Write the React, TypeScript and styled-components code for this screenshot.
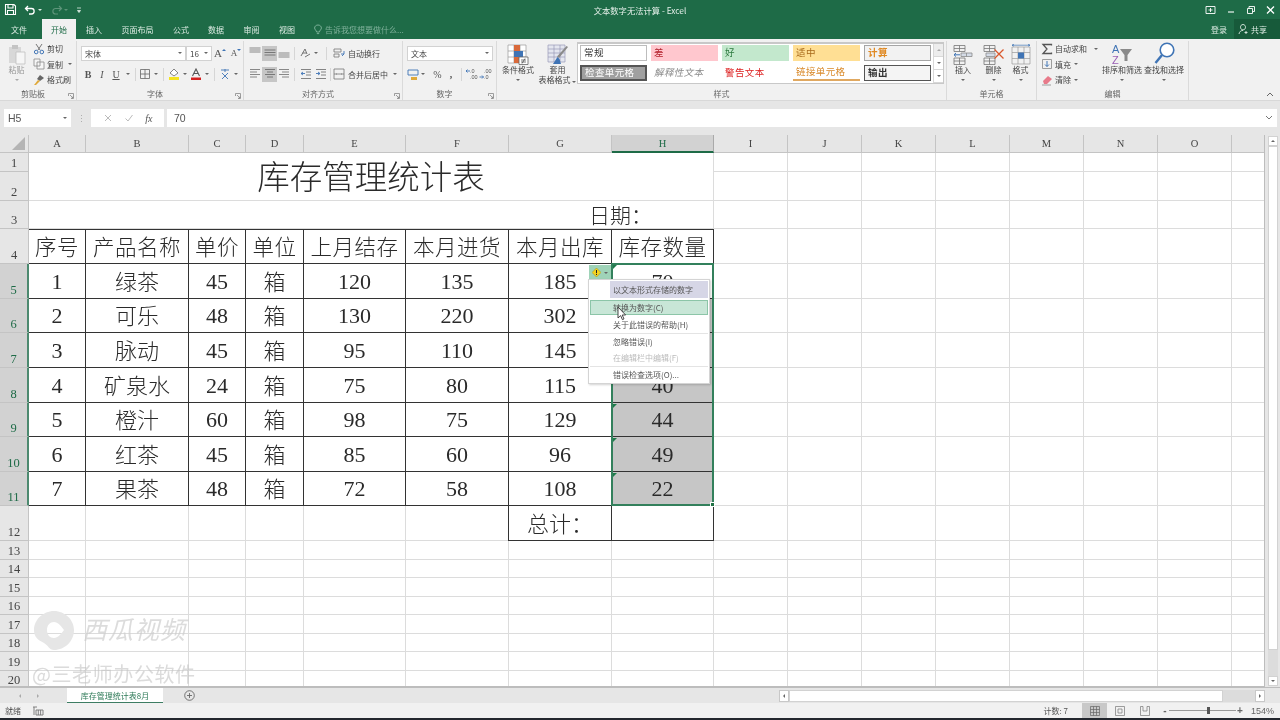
import React from 'react';
import styled, { createGlobalStyle, css } from 'styled-components';

const UI_FONT = '"Noto Sans CJK SC", "Liberation Sans", sans-serif';
const SHEET_FONT = '"Liberation Serif", "Noto Sans CJK SC", serif';
const GREEN = '#1e6b47';

const GlobalStyle = createGlobalStyle`
  html, body { margin: 0; padding: 0; background: #fff; }
  * { box-sizing: border-box; }
`;

const Window = styled.div`
  width: 1280px;
  height: 720px;
  overflow: hidden;
  position: relative;
  display: flex;
  flex-direction: column;
  font-family: ${UI_FONT};
  font-size: 8px;
  color: #444;
  background: #e6e6e6;
  filter: blur(0.35px);
`;

/* ---------- title bar ---------- */

const TitleBar = styled.div`
  height: 39px;
  flex: none;
  background: ${GREEN};
  color: #fff;
`;

const TopStrip = styled.div`
  height: 19px;
  display: grid;
  grid-template-columns: 1fr auto 1fr;
  align-items: center;
`;

const QuickAccess = styled.div`
  display: flex;
  align-items: center;
`;

const QatSlot = styled.div<{ $w: number; $ml: number }>`
  width: ${(p) => p.$w}px;
  margin-left: ${(p) => p.$ml}px;
  display: flex;
  align-items: center;
  justify-content: center;
`;

const DocTitle = styled.div`
  font-size: 8.3px;
  color: #e4efe9;
`;

const WindowButtons = styled.div`
  display: flex;
  justify-content: flex-end;
  gap: 9px;
  padding-right: 4px;
`;

const TabRow = styled.div`
  height: 20px;
  display: flex;
  align-items: stretch;
`;

const RibbonTab = styled.div<{ $w: number; $ml?: number; $active?: boolean }>`
  width: ${(p) => p.$w}px;
  margin-left: ${(p) => p.$ml || 0}px;
  display: flex;
  align-items: center;
  justify-content: center;
  font-size: 8px;
  color: #dcebe3;
  ${(p) =>
    p.$active &&
    css`
      background: #f1f1f1;
      color: ${GREEN};
    `}
`;

const TellMe = styled.div`
  display: flex;
  align-items: center;
  gap: 3px;
  margin-left: 10px;
  color: #7fb09a;
  font-size: 8px;
  flex: 1;
`;

const LoginLink = styled.div`
  display: flex;
  align-items: center;
  margin-right: 7px;
  color: #dcebe3;
`;

const ShareButton = styled.div`
  width: 46px;
  display: flex;
  align-items: center;
  gap: 3px;
  padding-left: 4px;
  background: #175a3a;
  color: #dcebe3;
`;

/* ---------- ribbon ---------- */

const Ribbon = styled.div`
  height: 62px;
  flex: none;
  display: flex;
  background: #f1f1f1;
  padding-top: 2px;
  position: relative;
  border-bottom: 1px solid #d8d8d8;
`;

const GroupBox = styled.div<{ $w: number }>`
  width: ${(p) => p.$w}px;
  flex: none;
  height: 59px;
  display: flex;
  flex-direction: column;
  border-right: 1px solid #dadada;
  position: relative;
`;

const GroupBody = styled.div`
  flex: 1;
  display: flex;
  min-height: 0;
`;

const GroupLabel = styled.div<{ $launcher?: boolean }>`
  height: 13px;
  line-height: 13px;
  text-align: center;
  color: #666;
  font-size: 8px;
  padding-right: ${(p) => (p.$launcher ? 10 : 0)}px;
`;

const Launcher = styled.svg`
  position: absolute;
  right: 2px;
  bottom: 1px;
`;

const caretTurn = { down: 0, up: 180, left: 90, right: -90 };

const Caret = styled.i<{ $dim?: boolean; $dir?: keyof typeof caretTurn; $color?: string; $ml?: number }>`
  display: inline-block;
  flex: none;
  width: 0;
  height: 0;
  border-left: 2px solid transparent;
  border-right: 2px solid transparent;
  border-top: 2px solid ${(p) => p.$color || (p.$dim ? '#aaa' : '#666')};
  transform: rotate(${(p) => caretTurn[p.$dir || 'down']}deg);
  margin-left: ${(p) => p.$ml || 0}px;
`;

const BigButton = styled.div<{ $w: number; $dim?: boolean }>`
  width: ${(p) => p.$w}px;
  flex: none;
  display: flex;
  flex-direction: column;
  align-items: center;
  padding-top: 1px;
  line-height: 10px;
  font-size: 8px;
  white-space: nowrap;
  color: ${(p) => (p.$dim ? '#999' : '#444')};
`;

const BigIconSlot = styled.div`
  height: 23px;
  display: flex;
  align-items: flex-end;
  justify-content: center;
`;

const BigCaretSlot = styled.div`
  height: 9px;
  display: flex;
  align-items: center;
`;

const Stack = styled.div<{ $w?: number; $pl?: number; $two?: boolean }>`
  display: flex;
  flex-direction: column;
  flex: none;
  height: 46px;
  ${(p) => (p.$w ? `width: ${p.$w}px;` : '')}
  padding-left: ${(p) => p.$pl || 0}px;
  ${(p) =>
    p.$two
      ? css`
          padding-top: 4.5px;
          gap: 6px;
        `
      : css`
          justify-content: space-between;
        `}
`;

const ToolRow = styled.div`
  display: flex;
  align-items: center;
  height: 15px;
  white-space: nowrap;
  font-size: 8px;
`;

const ToolBtn = styled.div<{ $w: number; $on?: boolean; $ml?: number }>`
  width: ${(p) => p.$w}px;
  height: 15px;
  flex: none;
  display: flex;
  align-items: center;
  justify-content: center;
  color: #444;
  margin-left: ${(p) => p.$ml || 0}px;
  ${(p) => p.$on && 'background: #c6c6c6;'}
`;

const Glyph = styled.span<{ $size: number; $bold?: boolean; $italic?: boolean; $under?: boolean }>`
  font-family: 'Liberation Serif', serif;
  font-size: ${(p) => p.$size}px;
  font-weight: ${(p) => (p.$bold ? 700 : 400)};
  font-style: ${(p) => (p.$italic ? 'italic' : 'normal')};
  text-decoration: ${(p) => (p.$under ? 'underline' : 'none')};
  color: #555;
`;

const RaisedCaret = styled(Caret)`
  margin-top: -6px;
`;

const Divider = styled.span<{ $m: number }>`
  width: 1px;
  height: 13px;
  flex: none;
  margin: 0 ${(p) => p.$m}px;
  background: #d6d6d6;
`;

const Combo = styled.div<{ $w: number }>`
  width: ${(p) => p.$w}px;
  height: 15px;
  flex: none;
  display: flex;
  align-items: center;
  justify-content: space-between;
  padding: 0 3px;
  background: #fff;
  border: 1px solid #d2d2d2;
  font-size: 8px;
  color: #444;
`;

const LabelText = styled.span<{ $ml?: number; $mr?: number }>`
  margin-left: ${(p) => p.$ml || 0}px;
  margin-right: ${(p) => p.$mr || 0}px;
`;

const Gallery = styled.div`
  margin: 1px 0 0 1px;
  width: 367px;
  height: 42px;
  flex: none;
  display: flex;
  background: #fff;
  border: 1px solid #c8c8c8;
  border-top-width: 2px;
`;

const GalleryGrid = styled.div`
  flex: 1;
  display: grid;
  grid-template-columns: repeat(5, 67px);
  grid-auto-rows: 16px;
  column-gap: 4px;
  row-gap: 4px;
  padding: 1px 0 0 2px;
`;

const styleKinds = {
  normal: css`
    background: #fff;
    color: #333;
    border: 1px solid #bdbdbd;
  `,
  bad: css`
    background: #ffc7ce;
    color: #b5232f;
  `,
  good: css`
    background: #c3e8cd;
    color: #2d7a3f;
  `,
  neutral: css`
    background: #ffdf94;
    color: #a8691a;
  `,
  calc: css`
    background: #f2f2f2;
    color: #e08a24;
    font-weight: 700;
    border: 1px solid #a5a5a5;
  `,
  check: css`
    background: #a0a0a0;
    color: #fff;
    border: 2px solid #555;
  `,
  note: css`
    color: #8a8a8a;
    font-style: italic;
  `,
  warn: css`
    color: #d22;
  `,
  link: css`
    color: #d98a2b;
    border-bottom: 2px solid #e0a860;
  `,
  output: css`
    background: #f4f4f4;
    color: #333;
    font-weight: 700;
    border: 1px solid #555;
  `,
};

const StyleCell = styled.div<{ $kind: keyof typeof styleKinds }>`
  display: flex;
  align-items: center;
  padding-left: 3px;
  font-size: 9.5px;
  letter-spacing: 0.4px;
  line-height: 1;
  ${(p) => styleKinds[p.$kind]}
`;

const GalleryScroll = styled.div`
  width: 10px;
  display: flex;
  flex-direction: column;
  border-left: 1px solid #d8d8d8;
`;

const GalleryArrow = styled.div<{ $dim?: boolean }>`
  flex: 1;
  display: flex;
  align-items: center;
  justify-content: center;
  background: ${(p) => (p.$dim ? '#ededed' : '#fff')};
  border-bottom: 1px solid #d8d8d8;
`;

const CollapseRibbon = styled.svg`
  position: absolute;
  right: 6px;
  bottom: 3px;
`;

/* ---------- formula bar ---------- */

const FormulaBar = styled.div`
  height: 34px;
  flex: none;
  display: flex;
  align-items: flex-start;
  padding: 8px 3px 0 4px;
  background: #e6e6e6;
`;

const NameBox = styled.div`
  width: 67px;
  height: 18px;
  display: flex;
  align-items: center;
  justify-content: space-between;
  padding: 0 4px;
  background: #fff;
  font: 10.5px 'Liberation Sans', sans-serif;
  color: #555;
`;

const Grip = styled.div`
  width: 20px;
  height: 18px;
  display: flex;
  align-items: center;
  justify-content: center;
  color: #aaa;
  font-size: 9px;
`;

const FormulaTools = styled.div`
  width: 73px;
  height: 18px;
  display: flex;
  align-items: center;
  justify-content: space-around;
  padding: 0 6px;
  background: #fff;
  margin-right: 3px;
`;

const FxMark = styled.span`
  font: italic 10px 'Liberation Serif', serif;
  color: #555;
`;

const FormulaInput = styled.div`
  flex: 1;
  height: 18px;
  display: flex;
  align-items: center;
  justify-content: space-between;
  padding: 0 4px 0 7px;
  background: #fff;
  font: 10.5px 'Liberation Sans', sans-serif;
  color: #555;
`;

/* ---------- sheet ---------- */

const SheetArea = styled.div`
  height: 552px;
  flex: none;
  display: flex;
  background: #e6e6e6;
`;

const GridClip = styled.div`
  width: 1265px;
  height: 552px;
  overflow: hidden;
  position: relative;
  background: #fff;
  border-right: 1px solid #bdbdbd;
  border-bottom: 1px solid #bdbdbd;
`;

const colWidths = [29, 57, 103, 57, 58, 102, 103, 103, 102, 74, 74, 74, 74, 74, 74, 74, 34];
const rowHeights = [18, 19, 29, 28, 35, 35, 34, 35, 35, 34, 35, 34, 35, 18.5, 18.5, 18.5, 18.5, 18.5, 18.5, 18.5, 18.5];

const SheetGrid = styled.div`
  display: grid;
  grid-template-columns: ${colWidths.map((w) => `${w}px`).join(' ')};
  grid-template-rows: ${rowHeights.map((h) => `${h}px`).join(' ')};
  font-family: ${SHEET_FONT};
  color: #2a2a2a;
`;

const placed = css<{ $c: number; $r: number; $cs?: number; $rs?: number }>`
  grid-column: ${(p) => p.$c} / span ${(p) => p.$cs || 1};
  grid-row: ${(p) => p.$r} / span ${(p) => p.$rs || 1};
`;

const Corner = styled.div`
  grid-column: 1;
  grid-row: 1;
  background: #e6e6e6;
  border-right: 1px solid #c4c4c4;
  border-bottom: 1px solid #c4c4c4;
  display: flex;
  align-items: flex-end;
  justify-content: flex-end;
  padding: 0 2px 2px 0;
`;

const ColHead = styled.div<{ $c: number; $r: number; $on?: boolean }>`
  ${placed}
  display: flex;
  align-items: center;
  justify-content: center;
  font: 10.5px ${SHEET_FONT};
  background: ${(p) => (p.$on ? '#d2d2d2' : '#e6e6e6')};
  border-right: 1px solid ${(p) => (p.$on ? '#aaa' : '#c4c4c4')};
  border-bottom: ${(p) => (p.$on ? `2px solid ${GREEN}` : '1px solid #c4c4c4')};
  color: ${(p) => (p.$on ? GREEN : '#444')};
`;

const RowHead = styled.div<{ $c: number; $r: number; $on?: boolean }>`
  ${placed}
  display: flex;
  align-items: flex-end;
  justify-content: center;
  padding-bottom: 1px;
  font: 12.5px/14px ${SHEET_FONT};
  background: ${(p) => (p.$on ? '#d2d2d2' : '#e6e6e6')};
  color: ${(p) => (p.$on ? GREEN : '#444')};
  border-right: ${(p) => (p.$on ? `2px solid #4d8a70` : '1px solid #c4c4c4')};
  border-bottom: 1px solid #c4c4c4;
`;

const Cell = styled.div<{
  $c: number;
  $r: number;
  $cs?: number;
  $rs?: number;
  $table?: boolean;
  $sel?: boolean;
  $flag?: boolean;
  $cjk?: boolean;
  $edge?: boolean;
}>`
  ${placed}
  position: relative;
  display: flex;
  align-items: center;
  justify-content: center;
  font-size: 22px;
  font-weight: ${(p) => (p.$cjk ? 300 : 400)};
  white-space: nowrap;
  padding: ${(p) => (p.$cjk ? '0 0 3px' : '1px 0 0')};
  background: ${(p) => (p.$sel ? '#c6c6c6' : '#fff')};
  border-right: 1px solid ${(p) => (p.$table ? '#333' : '#dcdcdc')};
  border-bottom: 1px solid ${(p) => (p.$table ? '#333' : '#dcdcdc')};
  ${(p) => p.$edge && 'border-left: 1px solid #333; margin-left: -1px;'}
  ${(p) =>
    p.$flag &&
    css`
      &::before {
        content: '';
        position: absolute;
        left: 1px;
        top: 1px;
        border-top: 4px solid #1e7a4a;
        border-right: 4px solid transparent;
      }
    `}
`;

const TitleCell = styled(Cell)`
  font-size: 32.5px;
  padding: 0 0 5px;
`;

const DateCell = styled(Cell)`
  justify-content: flex-start;
  padding: 0 0 2px 560px;
  font-size: 21px;
`;

const HeaderCell = styled(Cell)`
  font-size: 21.5px;
  letter-spacing: 0.5px;
  border-top: 1px solid #333;
`;

const Selection = styled.div<{ $c: number; $r: number; $rs?: number }>`
  ${placed}
  position: relative;
  pointer-events: none;
  border: 2px solid #33805c;
  margin: -1px 0 0 -1px;
  z-index: 2;
`;

const FillHandle = styled.span`
  position: absolute;
  right: -3px;
  bottom: -3px;
  width: 5px;
  height: 5px;
  background: #217346;
  border: 1px solid #fff;
`;

const SmartTag = styled.div`
  position: absolute;
  left: 589px;
  top: 130px;
  width: 22px;
  height: 15px;
  display: flex;
  align-items: center;
  justify-content: space-around;
  padding: 0 2px;
  background: #9fd3b8;
  z-index: 4;
`;

const ErrorMenu = styled.div`
  position: absolute;
  left: 588px;
  top: 144px;
  width: 122px;
  height: 105px;
  padding: 1px;
  background: #fff;
  border: 1px solid #d4d4d4;
  box-shadow: 1px 1px 2px rgba(0, 0, 0, 0.18);
  font: 8px ${UI_FONT};
  color: #555;
  z-index: 5;
`;

const MenuHeading = styled.div`
  height: 17px;
  margin-left: 20px;
  padding-left: 3px;
  display: flex;
  align-items: center;
  background: #d6d6e6;
  color: #555;
`;

const MenuItem = styled.div<{ $hover?: boolean; $off?: boolean; $sep?: boolean }>`
  height: 16.7px;
  padding-left: 23px;
  display: flex;
  align-items: center;
  color: ${(p) => (p.$off ? '#bbb' : '#555')};
  ${(p) => p.$sep && 'border-top: 1px solid #e4e4e4;'}
  ${(p) =>
    p.$hover &&
    css`
      height: 15px;
      margin: 2px 0 1px;
      background: #c8e6d7;
      border: 1px solid #8cc5a8;
      padding-left: 22px;
    `}
`;

const Pointer = styled.svg`
  position: absolute;
  left: 617px;
  top: 171px;
  z-index: 6;
`;

const WatermarkLogo = styled.svg`
  position: absolute;
  left: 33px;
  top: 475px;
  z-index: 3;
`;

const WatermarkBrand = styled.div`
  position: absolute;
  left: 82px;
  top: 477px;
  font: italic 400 25px/32px ${UI_FONT};
  letter-spacing: 1px;
  color: rgba(205, 205, 205, 0.7);
  z-index: 3;
`;

const WatermarkUser = styled.div`
  position: absolute;
  left: 32px;
  top: 526px;
  font: 20px/26px ${UI_FONT};
  letter-spacing: 0.6px;
  color: rgba(195, 195, 195, 0.6);
  z-index: 3;
`;

const VScroll = styled.div`
  width: 15px;
  display: flex;
  flex-direction: column;
  padding: 1px 2px 1px 3px;
`;

const ScrollEnd = styled.div`
  height: 10px;
  flex: none;
  display: flex;
  align-items: center;
  justify-content: center;
  background: #fff;
  border: 1px solid #d2d2d2;
`;

const VThumb = styled.div`
  height: 504px;
  flex: none;
  background: #fff;
  border: 1px solid #d2d2d2;
`;

const VTrack = styled.div`
  flex: 1;
  background: #dcdcdc;
`;

/* ---------- sheet tabs and status bar ---------- */

const TabStrip = styled.div`
  height: 16px;
  flex: none;
  display: flex;
  align-items: center;
  background: #e6e6e6;
  border-top: 1px solid #bdbdbd;
`;

const TabNav = styled.div`
  width: 67px;
  display: flex;
  justify-content: flex-end;
  gap: 14px;
  padding-right: 27px;
  align-items: center;
`;

const SheetTab = styled.div`
  width: 96px;
  height: 16px;
  margin-top: 1px;
  display: flex;
  align-items: center;
  justify-content: center;
  background: #fff;
  color: #2d7a57;
  font-size: 8px;
  border-bottom: 2px solid #3d7d63;
`;

const AddSheet = styled.svg`
  margin-left: 21px;
  margin-right: 584px;
`;

const HScroll = styled.div`
  width: 486px;
  height: 13px;
  display: flex;
  align-items: center;
`;

const HThumb = styled.div`
  width: 434px;
  height: 12px;
  background: #fff;
  border: 1px solid #d2d2d2;
`;

const HTrack = styled.div`
  flex: 1;
  height: 12px;
  background: #dcdcdc;
`;

const HButton = styled.div`
  width: 10px;
  height: 12px;
  display: flex;
  align-items: center;
  justify-content: center;
  background: #fff;
  border: 1px solid #c8c8c8;
`;

const StatusBar = styled.div`
  height: 15px;
  flex: none;
  display: flex;
  align-items: center;
  background: #f1f1f1;
  padding-left: 5px;
  color: #555;
`;

const MacroSlot = styled.div`
  margin-left: 11px;
`;

const StatusSpacer = styled.div`
  flex: 1;
`;

const CountText = styled.span`
  margin-right: 14px;
`;

const ViewBtn = styled.div<{ $on?: boolean }>`
  width: 25px;
  height: 15px;
  display: flex;
  align-items: center;
  justify-content: center;
  background: ${(p) => (p.$on ? '#c8c8c8' : 'transparent')};
`;

const ZoomSlider = styled.div`
  width: 67px;
  height: 1px;
  background: #999;
  position: relative;
`;

const ZoomKnob = styled.span`
  position: absolute;
  left: 38px;
  top: -3px;
  width: 3px;
  height: 7px;
  background: #555;
`;

const ZoomSign = styled.span<{ $ml?: number }>`
  font: 700 10px/10px 'Liberation Sans', sans-serif;
  color: #666;
  width: 8px;
  text-align: center;
  margin-left: ${(p) => p.$ml || 0}px;
`;

const ZoomValue = styled.span`
  width: 29px;
  margin-left: 7px;
  font: 9px 'Liberation Sans', sans-serif;
  color: #666;
`;

const TaskEdge = styled.div`
  height: 2px;
  flex: none;
  background: #23272e;
`;

/* ---------- icons ---------- */

const Svg = styled.svg`
  display: block;
  flex: none;
`;

type IconProps = { w?: number; h?: number; children: React.ReactNode };
const Icon = ({ w = 12, h = 12, children }: IconProps) => (
  <Svg width={w} height={h} viewBox={`0 0 ${w} ${h}`} fill="none">
    {children}
  </Svg>
);

const LauncherIcon = () => (
  <Launcher width="6" height="6" viewBox="0 0 6 6" fill="none" stroke="#888" strokeWidth="0.8">
    <path d="M0.5 3V.5H5.5V5.5H3M2 2L5 5M5 3.5V5H3.5" />
  </Launcher>
);

const Group = ({ w, label, launcher, children }: { w: number; label: string; launcher?: boolean; children: React.ReactNode }) => (
  <GroupBox $w={w}>
    <GroupBody>{children}</GroupBody>
    <GroupLabel $launcher={launcher}>{label}</GroupLabel>
    {launcher && <LauncherIcon />}
  </GroupBox>
);

const Big = ({ w, icon, label, label2, dim, inlineCaret }: { w: number; icon: React.ReactNode; label: string; label2?: string; dim?: boolean; inlineCaret?: boolean }) => (
  <BigButton $w={w} $dim={dim}>
    <BigIconSlot>{icon}</BigIconSlot>
    <span>{label}</span>
    {label2 ? (
      <span>
        {label2} {inlineCaret && <Caret />}
      </span>
    ) : (
      <BigCaretSlot>
        <Caret $dim={dim} />
      </BigCaretSlot>
    )}
  </BigButton>
);

const AlignLines = ({ kind }: { kind: 'top' | 'mid' | 'bot' | 'left' | 'center' | 'right' }) => {
  const dark = kind === 'center' || kind === 'mid' ? '#777' : '#888';
  const ys = kind === 'top' ? [1, 3, 5] : kind === 'bot' ? [6, 8, 10] : kind === 'mid' ? [3, 5.5, 8] : [1.5, 4, 6.5, 9];
  const seg = (i: number) => {
    if (kind === 'left') return i % 2 ? 'M1 Y H8' : 'M1 Y H11';
    if (kind === 'center') return i % 2 ? 'M3 Y H9' : 'M1 Y H11';
    if (kind === 'right') return i % 2 ? 'M4 Y H11' : 'M1 Y H11';
    return 'M0.5 Y H11.5';
  };
  return (
    <Icon>
      <path d={ys.map((y, i) => seg(i).replace('Y', String(y))).join(' ')} stroke={dark} strokeWidth="1.1" />
    </Icon>
  );
};

const DecimalIcon = ({ grow }: { grow?: boolean }) => (
  <Icon w={14} h={12}>
    <text x="5" y="5" fontSize="5.5" fontFamily="Liberation Sans" fill="#555">
      {grow ? '.0' : '.00'}
    </text>
    <text x="5" y="11" fontSize="5.5" fontFamily="Liberation Sans" fill="#555">
      {grow ? '.00' : '.0'}
    </text>
    <path d={grow ? 'M5 3H1M2.5 1.5L1 3L2.5 4.5' : 'M0.5 9H4.5M3 7.5L4.5 9L3 10.5'} stroke="#3f74b5" strokeWidth="0.9" />
  </Icon>
);

const rows = [
  ['1', '绿茶', '45', '箱', '120', '135', '185', '70'],
  ['2', '可乐', '48', '箱', '130', '220', '302', ''],
  ['3', '脉动', '45', '箱', '95', '110', '145', ''],
  ['4', '矿泉水', '24', '箱', '75', '80', '115', '40'],
  ['5', '橙汁', '60', '箱', '98', '75', '129', '44'],
  ['6', '红茶', '45', '箱', '85', '60', '96', '49'],
  ['7', '果茶', '48', '箱', '72', '58', '108', '22'],
];
const headers = ['序号', '产品名称', '单价', '单位', '上月结存', '本月进货', '本月出库', '库存数量'];
const columns = 'ABCDEFGHIJKLMNOP'.split('');
const H_COL = 9;

function Sheet() {
  const cells: React.ReactNode[] = [];
  const rowTotal = 20;

  columns.forEach((name, i) => {
    cells.push(
      <ColHead key={name} $c={i + 2} $r={1} $on={name === 'H'}>
        {name === 'P' ? '' : name}
      </ColHead>
    );
  });

  for (let n = 1; n <= rowTotal; n++) {
    const gridRow = n + 1;
    cells.push(
      <RowHead key={`r${n}`} $c={1} $r={gridRow} $on={n >= 5 && n <= 11}>
        {n}
      </RowHead>
    );
    // rows 1-11 hold the form in A:H, so only I onward gets plain cells
    const firstPlain = n <= 11 ? 10 : 2;
    for (let c = firstPlain; c <= columns.length + 1; c++) {
      if (n === 12 && (c === 8 || c === 9)) continue;
      cells.push(<Cell key={`${n}-${c}`} $c={c} $r={gridRow} />);
    }
  }

  cells.push(
    <TitleCell key="title" $c={2} $r={2} $cs={8} $rs={2} $cjk>
      库存管理统计表
    </TitleCell>
  );
  cells.push(
    <DateCell key="date" $c={2} $r={4} $cs={8} $cjk>
      日期：
    </DateCell>
  );
  headers.forEach((text, i) => {
    cells.push(
      <HeaderCell key={text} $c={i + 2} $r={5} $table $cjk>
        {text}
      </HeaderCell>
    );
  });
  rows.forEach((row, ri) => {
    row.forEach((value, ci) => {
      const isH = ci + 2 === H_COL;
      cells.push(
        <Cell key={`${ri}:${ci}`} $c={ci + 2} $r={ri + 6} $table $sel={isH && ri > 0} $flag={isH} $cjk={ci === 1 || ci === 3}>
          {value}
        </Cell>
      );
    });
  });
  cells.push(
    <Cell key="total" $c={8} $r={13} $table $cjk $edge>
      总计：
    </Cell>
  );
  cells.push(<Cell key="totalValue" $c={9} $r={13} $table />);

  return (
    <GridClip>
      <SheetGrid>
        <Corner>
          <svg width="14" height="13" viewBox="0 0 14 13">
            <path d="M13 0V13H0Z" fill="#b4b4b4" />
          </svg>
        </Corner>
        {cells}
        <Selection $c={H_COL} $r={6} $rs={7}>
          <FillHandle />
        </Selection>
      </SheetGrid>

      <SmartTag>
        <svg width="9" height="9" viewBox="0 0 9 9">
          <path d="M4.5 0L9 4.5L4.5 9L0 4.5Z" fill="#f5d21f" stroke="#9a8a1c" strokeWidth="0.5" />
          <path d="M4.5 2V5.2M4.5 6V7" stroke="#222" strokeWidth="1" />
        </svg>
        <Caret />
      </SmartTag>

      <ErrorMenu>
        <MenuHeading>以文本形式存储的数字</MenuHeading>
        <MenuItem $hover>转换为数字(C)</MenuItem>
        <MenuItem>关于此错误的帮助(H)</MenuItem>
        <MenuItem $sep>忽略错误(I)</MenuItem>
        <MenuItem $off>在编辑栏中编辑(F)</MenuItem>
        <MenuItem $sep>错误检查选项(O)...</MenuItem>
      </ErrorMenu>

      <Pointer width="10" height="15" viewBox="0 0 10 15">
        <path d="M1 1V12L3.6 9.6L5.4 13.6L7 12.9L5.2 9H8.6Z" fill="#fff" stroke="#333" strokeWidth="0.9" />
      </Pointer>

      <WatermarkLogo width="42" height="42" viewBox="0 0 42 42">
        <path
          fillRule="evenodd"
          d="M21 1C32 1 41 10 41 20C41 31 32 40 21 40C16 40 15 35 11 33C5 30 1 27 1 20C1 10 10 1 21 1ZM21 12C17 12 14 15 14 20C14 25 17 28 21 28C25 28 28 24 31 20C28 16 25 12 21 12Z"
          fill="#e6e6e6"
        />
      </WatermarkLogo>
      <WatermarkBrand>西瓜视频</WatermarkBrand>
      <WatermarkUser>@三老师办公软件</WatermarkUser>
    </GridClip>
  );
}

export default function App() {
  return (
    <Window>
      <GlobalStyle />
      <TitleBar>
        <TopStrip>
          <QuickAccess>
            <QatSlot $w={13} $ml={4}>
              <Icon w={13} h={13}>
                <path d="M1.5 1.5H10L11.5 3V11.5H1.5ZM4 1.5V5H9V1.5M3.5 11.5V7.5H9.5V11.5" stroke="#fff" strokeWidth="1.1" />
              </Icon>
            </QatSlot>
            <QatSlot $w={14} $ml={6}>
              <Icon w={13} h={12}>
                <path d="M4 2L1.5 4.5L4 7M2 4.5H7.5C11 4.5 11 10 7.5 10H5" stroke="#fff" strokeWidth="1.3" />
              </Icon>
            </QatSlot>
            <QatSlot $w={6} $ml={0}>
              <Caret $color="#dcebe3" />
            </QatSlot>
            <QatSlot $w={12} $ml={8}>
              <Icon w={12} h={12}>
                <path d="M8 2L10.5 4.5L8 7M10 4.5H4.5C1 4.5 1 10 4.5 10H7" stroke="#5d9479" strokeWidth="1.2" />
              </Icon>
            </QatSlot>
            <QatSlot $w={6} $ml={0}>
              <Caret $color="#5d9479" />
            </QatSlot>
            <QatSlot $w={8} $ml={6}>
              <Icon w={8} h={8}>
                <path d="M2 2H6M2.5 4.5H5.5L4 6.5Z" stroke="#dcebe3" strokeWidth="0.8" fill="#dcebe3" />
              </Icon>
            </QatSlot>
          </QuickAccess>
          <DocTitle>文本数字无法计算 - Excel</DocTitle>
          <WindowButtons>
            <Icon w={11} h={10}>
              <path d="M1 1.5H10V8.5H1ZM5.5 3V7M3.5 5H7.5" stroke="#fff" strokeWidth="0.9" />
            </Icon>
            <Icon w={11} h={10}>
              <path d="M3 7H9" stroke="#fff" strokeWidth="1.1" />
            </Icon>
            <Icon w={11} h={10}>
              <path d="M2.5 3.5H7.5V8.5H2.5ZM4 3.5V1.5H9.5V6.5H7.5" stroke="#fff" strokeWidth="0.9" />
            </Icon>
            <Icon w={11} h={10}>
              <path d="M2 1.5L9 8.5M9 1.5L2 8.5" stroke="#fff" strokeWidth="1.3" />
            </Icon>
          </WindowButtons>
        </TopStrip>
        <TabRow>
          <RibbonTab $w={38}>文件</RibbonTab>
          <RibbonTab $w={34} $ml={4} $active>开始</RibbonTab>
          <RibbonTab $w={36}>插入</RibbonTab>
          <RibbonTab $w={51}>页面布局</RibbonTab>
          <RibbonTab $w={36}>公式</RibbonTab>
          <RibbonTab $w={34}>数据</RibbonTab>
          <RibbonTab $w={37}>审阅</RibbonTab>
          <RibbonTab $w={34}>视图</RibbonTab>
          <TellMe>
            <Icon w={8} h={11}>
              <path d="M4 1C6 1 7.4 2.4 7.4 4C7.4 5.6 5.6 6.4 5.4 8H2.6C2.4 6.4.6 5.6.6 4C.6 2.4 2 1 4 1ZM2.8 9.6H5.2" stroke="#8fc0aa" strokeWidth="0.8" />
            </Icon>
            告诉我您想要做什么...
          </TellMe>
          <LoginLink>登录</LoginLink>
          <ShareButton>
            <Icon w={10} h={12}>
              <path d="M5 1.5C6.6 1.5 7.5 2.8 7.5 4.2C7.5 5.6 6.6 6.9 5 6.9C3.4 6.9 2.5 5.6 2.5 4.2C2.5 2.8 3.4 1.5 5 1.5ZM1 11C1.4 8.6 3 7.4 5 7.4M6.5 9.5H9.5M8 8V11" stroke="#dcebe3" strokeWidth="0.9" />
            </Icon>
            共享
          </ShareButton>
        </TabRow>
      </TitleBar>

      <Ribbon>
        <Group w={77} label="剪贴板" launcher>
          <Big
            w={33}
            dim
            label="粘贴"
            icon={
              <Icon w={20} h={22}>
                <path d="M2 4H14V20H2Z" fill="#d8d8d8" />
                <path d="M5 2H11V6H5Z" fill="#c4c4c4" />
                <path d="M9 9H18V21H9Z" fill="#f6f6f6" stroke="#c0c0c0" strokeWidth="0.8" />
              </Icon>
            }
          />
          <Stack>
            <ToolRow>
              <Icon>
                <path d="M3 1L7 7M9 1L5 7" stroke="#777" strokeWidth="1" />
                <circle cx="3.2" cy="9" r="1.8" stroke="#3f74b5" strokeWidth="1" />
                <circle cx="8.8" cy="9" r="1.8" stroke="#3f74b5" strokeWidth="1" />
              </Icon>
              <LabelText $ml={2}>剪切</LabelText>
            </ToolRow>
            <ToolRow>
              <Icon>
                <path d="M1 1H7V8H1ZM4 4H11V11H4Z" stroke="#8a8a8a" strokeWidth="0.8" fill="#f6f6f6" />
              </Icon>
              <LabelText $ml={2} $mr={5}>复制</LabelText>
              <Caret />
            </ToolRow>
            <ToolRow>
              <Icon>
                <path d="M7 1L11 4L7 7L4 5Z" fill="#666" />
                <path d="M5 6L1 11H3L7 7Z" fill="#e0a93a" />
              </Icon>
              <LabelText $ml={2}>格式刷</LabelText>
            </ToolRow>
          </Stack>
        </Group>

        <Group w={167} label="字体" launcher>
          <Stack $pl={4} $two>
            <ToolRow>
              <Combo $w={105}>
                宋体 <Caret />
              </Combo>
              <Combo $w={26}>
                16 <Caret />
              </Combo>
              <ToolBtn $w={16}>
                <Glyph $size={11}>A</Glyph>
                <RaisedCaret $dir="up" $color="#3f74b5" />
              </ToolBtn>
              <ToolBtn $w={16}>
                <Glyph $size={9}>A</Glyph>
                <RaisedCaret $color="#3f74b5" />
              </ToolBtn>
            </ToolRow>
            <ToolRow>
              <ToolBtn $w={14}><Glyph $size={10} $bold>B</Glyph></ToolBtn>
              <ToolBtn $w={14}><Glyph $size={10} $italic>I</Glyph></ToolBtn>
              <ToolBtn $w={14}><Glyph $size={10} $under>U</Glyph></ToolBtn>
              <ToolBtn $w={10}><Caret /></ToolBtn>
              <Divider $m={2} />
              <ToolBtn $w={14}>
                <Icon w={10} h={10}>
                  <path d="M.5 .5H9.5V9.5H.5ZM5 .5V9.5M.5 5H9.5" stroke="#666" strokeWidth="0.8" />
                </Icon>
              </ToolBtn>
              <ToolBtn $w={8}><Caret /></ToolBtn>
              <Divider $m={3} />
              <ToolBtn $w={14}>
                <Icon>
                  <path d="M6 1L10 5L6 8L2 5Z" stroke="#666" strokeWidth="0.8" fill="#fff" />
                  <path d="M1 9H11V12H1Z" fill="#f5e31f" />
                </Icon>
              </ToolBtn>
              <ToolBtn $w={7}><Caret /></ToolBtn>
              <ToolBtn $w={15}>
                <Icon>
                  <path d="M2.5 8L6 1L9.5 8M4 5.5H8" stroke="#555" strokeWidth="1.1" />
                  <path d="M1 9.5H11V12H1Z" fill="#d42020" />
                </Icon>
              </ToolBtn>
              <ToolBtn $w={8}><Caret /></ToolBtn>
              <Divider $m={3} />
              <ToolBtn $w={14}>
                <Icon>
                  <path d="M2 2H10M6 1V4M3 5L9 11M9 5L3 11" stroke="#3f74b5" strokeWidth="0.9" />
                </Icon>
              </ToolBtn>
              <ToolBtn $w={8}><Caret /></ToolBtn>
            </ToolRow>
          </Stack>
        </Group>

        <Group w={159} label="对齐方式" launcher>
          <Stack $pl={4} $two>
            <ToolRow>
              <ToolBtn $w={14}><AlignLines kind="top" /></ToolBtn>
              <ToolBtn $w={15} $on><AlignLines kind="mid" /></ToolBtn>
              <ToolBtn $w={14}><AlignLines kind="bot" /></ToolBtn>
              <Divider $m={3} />
              <ToolBtn $w={14}>
                <Icon>
                  <path d="M2 9L6 2L8 7M3.5 6H7.5M6 10L11 7" stroke="#666" strokeWidth="0.9" />
                </Icon>
              </ToolBtn>
              <ToolBtn $w={8}><Caret /></ToolBtn>
              <Divider $m={6} />
              <Icon>
                <path d="M1 2H8V5H1ZM1 7H6V10H1Z" stroke="#777" strokeWidth="0.8" />
                <path d="M8 7H11V4M11 7L9 9" stroke="#3f74b5" strokeWidth="0.9" />
              </Icon>
              <LabelText $ml={3}>自动换行</LabelText>
            </ToolRow>
            <ToolRow>
              <ToolBtn $w={14}><AlignLines kind="left" /></ToolBtn>
              <ToolBtn $w={15} $on><AlignLines kind="center" /></ToolBtn>
              <ToolBtn $w={14}><AlignLines kind="right" /></ToolBtn>
              <Divider $m={3} />
              <ToolBtn $w={15}>
                <Icon>
                  <path d="M1 1.5H11M6 4H11M6 7H11M1 10.5H11" stroke="#777" strokeWidth="0.9" />
                  <path d="M5 5.5H1M3 4L1 5.5L3 7" stroke="#3f74b5" strokeWidth="0.9" />
                </Icon>
              </ToolBtn>
              <ToolBtn $w={15}>
                <Icon>
                  <path d="M1 1.5H11M6 4H11M6 7H11M1 10.5H11" stroke="#777" strokeWidth="0.9" />
                  <path d="M1 5.5H5M3 4L5 5.5L3 7" stroke="#3f74b5" strokeWidth="0.9" />
                </Icon>
              </ToolBtn>
              <Divider $m={2} />
              <Icon>
                <path d="M1 1H11V11H1ZM1 6H4M8 6H11M3 6H9" stroke="#777" strokeWidth="0.8" />
              </Icon>
              <LabelText $ml={3} $mr={5}>合并后居中</LabelText>
              <Caret />
            </ToolRow>
          </Stack>
        </Group>

        <Group w={94} label="数字" launcher>
          <Stack $pl={4} $two>
            <ToolRow>
              <Combo $w={86}>
                文本 <Caret />
              </Combo>
            </ToolRow>
            <ToolRow>
              <ToolBtn $w={12}>
                <Icon>
                  <path d="M1 2H11V7H1Z" stroke="#3f74b5" strokeWidth="0.9" />
                  <path d="M4 9H10V12H4Z" fill="#e0a93a" />
                </Icon>
              </ToolBtn>
              <ToolBtn $w={8}><Caret /></ToolBtn>
              <ToolBtn $w={13} $ml={4}><Glyph $size={10}>%</Glyph></ToolBtn>
              <ToolBtn $w={14}><Glyph $size={10} $bold>,</Glyph></ToolBtn>
              <Divider $m={3} />
              <ToolBtn $w={14}><DecimalIcon grow /></ToolBtn>
              <ToolBtn $w={14}><DecimalIcon /></ToolBtn>
            </ToolRow>
          </Stack>
        </Group>

        <Group w={450} label="样式">
          <Big
            w={42}
            label="条件格式"
            icon={
              <Icon w={22} h={21}>
                <path d="M1 1H19V19H1ZM1 7H19M1 13H19M7 1V19M13 1V19" stroke="#9a9a9a" strokeWidth="0.7" fill="#fff" />
                <path d="M7 1H13V7H7Z" fill="#d9693a" />
                <path d="M7 7H16V13H7Z" fill="#3f74b5" />
                <path d="M7 13H12V19H7Z" fill="#d9693a" />
                <path d="M12 13H21V20.5H12Z" fill="#fff" stroke="#666" strokeWidth="0.8" />
                <path d="M14 16H19M14 18H19M18 14.5L15 19.5" stroke="#444" strokeWidth="0.7" />
              </Icon>
            }
          />
          <Big
            w={37}
            label="套用"
            label2="表格格式"
            inlineCaret
            icon={
              <Icon w={22} h={21}>
                <path d="M1 1H18V18H1ZM1 5H18M1 9H18M1 13H18M7 1V18M13 1V18" stroke="#9a9ab8" strokeWidth="0.7" fill="#e4e6ef" />
                <path d="M21 3L12 14L10 12.5L19.5 2Z" fill="#8a8a8a" />
                <path d="M10.5 13L6 20H14L12.5 15Z" fill="#3f74b5" />
              </Icon>
            }
          />
          <Gallery>
            <GalleryGrid>
              <StyleCell $kind="normal">常规</StyleCell>
              <StyleCell $kind="bad">差</StyleCell>
              <StyleCell $kind="good">好</StyleCell>
              <StyleCell $kind="neutral">适中</StyleCell>
              <StyleCell $kind="calc">计算</StyleCell>
              <StyleCell $kind="check">检查单元格</StyleCell>
              <StyleCell $kind="note">解释性文本</StyleCell>
              <StyleCell $kind="warn">警告文本</StyleCell>
              <StyleCell $kind="link">链接单元格</StyleCell>
              <StyleCell $kind="output">输出</StyleCell>
            </GalleryGrid>
            <GalleryScroll>
              <GalleryArrow $dim>
                <Caret $dim $dir="up" />
              </GalleryArrow>
              <GalleryArrow>
                <Caret />
              </GalleryArrow>
              <GalleryArrow>
                <Caret />
              </GalleryArrow>
            </GalleryScroll>
          </Gallery>
        </Group>

        <Group w={90} label="单元格">
          <Big
            w={32}
            label="插入"
            icon={
              <Icon w={20} h={20}>
                <path d="M1 .5H12V6.5H1ZM6.5 .5V6.5M1 3.5H12" stroke="#777" strokeWidth="0.8" />
                <path d="M1 13H12V19.5H1ZM6.5 13V19.5M1 16H12" stroke="#777" strokeWidth="0.8" />
                <path d="M8 8H19V11.5H8ZM13.5 8V11.5" stroke="#8a8a8a" strokeWidth="0.8" fill="#d4dbe6" />
                <path d="M7 9.8H1M3 8L1 9.8L3 11.6" stroke="#3f74b5" strokeWidth="1" />
              </Icon>
            }
          />
          <Big
            w={29}
            label="删除"
            icon={
              <Icon w={22} h={20}>
                <path d="M1 .5H12V6.5H1ZM6.5 .5V6.5M1 3.5H12" stroke="#777" strokeWidth="0.8" />
                <path d="M1 13H12V19.5H1ZM6.5 13V19.5M1 16H12" stroke="#777" strokeWidth="0.8" />
                <path d="M3 8H12V11.5H3Z" stroke="#8a8a8a" strokeWidth="0.8" fill="#d4dbe6" />
                <path d="M11.5 4.5L20.5 13.5M20.5 4.5L11.5 13.5" stroke="#d9572b" strokeWidth="1.3" />
              </Icon>
            }
          />
          <Big
            w={25}
            label="格式"
            icon={
              <Icon w={20} h={21}>
                <path d="M1 3H19V20H1ZM1 8.5H19M1 14.5H19M7 3V20M13 3V20" stroke="#999" strokeWidth="0.7" />
                <path d="M7 8.5H13V14.5H7Z" fill="#3f74b5" />
                <path d="M1 1.2H19M3 .2L1 1.2L3 2.2M17 .2L19 1.2L17 2.2" stroke="#3f74b5" strokeWidth="0.7" />
              </Icon>
            }
          />
        </Group>

        <Group w={152} label="编辑">
          <Stack $w={64} $pl={4}>
            <ToolRow>
              <Icon>
                <path d="M10.5 2.5V1.5H2L6 6L2 10.5H10.5V9.5" stroke="#555" strokeWidth="1.3" />
              </Icon>
              <LabelText $ml={2} $mr={7}>自动求和</LabelText>
              <Caret />
            </ToolRow>
            <ToolRow>
              <Icon>
                <path d="M1.5 1.5H10.5V10.5H1.5Z" stroke="#888" strokeWidth="0.8" />
                <path d="M6 3V8.5M4 6.5L6 8.5L8 6.5" stroke="#3f74b5" strokeWidth="1" />
              </Icon>
              <LabelText $ml={2} $mr={3}>填充</LabelText>
              <Caret />
            </ToolRow>
            <ToolRow>
              <Icon>
                <path d="M2 7L7 2L11 5L6 10H3Z" fill="#e87a8a" />
                <path d="M1 11H10" stroke="#888" strokeWidth="0.8" />
              </Icon>
              <LabelText $ml={2} $mr={3}>清除</LabelText>
              <Caret />
            </ToolRow>
          </Stack>
          <Big
            w={42}
            label="排序和筛选"
            icon={
              <Icon w={24} h={22}>
                <text x="2" y="10" fontSize="11" fontFamily="Liberation Sans" fill="#3f74b5">A</text>
                <text x="2" y="21" fontSize="11" fontFamily="Liberation Sans" fill="#9a5fb5">Z</text>
                <path d="M10 6H22L17.5 12V18H14.5V12Z" fill="#8a8a8a" />
              </Icon>
            }
          />
          <Big
            w={42}
            label="查找和选择"
            icon={
              <Icon w={24} h={23}>
                <circle cx="15" cy="8" r="6.8" stroke="#3f74b5" strokeWidth="1.6" fill="#fff" />
                <path d="M10 13L3.5 21" stroke="#3f74b5" strokeWidth="2.4" />
              </Icon>
            }
          />
        </Group>
        <CollapseRibbon width="8" height="5" viewBox="0 0 8 5" fill="none" stroke="#666" strokeWidth="1">
          <path d="M1 4L4 1L7 4" />
        </CollapseRibbon>
      </Ribbon>

      <FormulaBar>
        <NameBox>
          H5 <Caret />
        </NameBox>
        <Grip>⋮</Grip>
        <FormulaTools>
          <Icon w={10} h={10}>
            <path d="M2 2L8 8M8 2L2 8" stroke="#bbb" strokeWidth="1" />
          </Icon>
          <Icon w={10} h={10}>
            <path d="M1.5 5.5L4 8L8.5 2" stroke="#bbb" strokeWidth="1" />
          </Icon>
          <FxMark>fx</FxMark>
        </FormulaTools>
        <FormulaInput>
          70
          <Icon w={8} h={6}>
            <path d="M1 1L4 4L7 1" stroke="#777" strokeWidth="1" />
          </Icon>
        </FormulaInput>
      </FormulaBar>

      <SheetArea>
        <Sheet />
        <VScroll>
          <ScrollEnd>
            <Caret $dir="up" />
          </ScrollEnd>
          <VThumb />
          <VTrack />
          <ScrollEnd>
            <Caret />
          </ScrollEnd>
        </VScroll>
      </SheetArea>

      <TabStrip>
        <TabNav>
          <Caret $dim $dir="left" />
          <Caret $dim $dir="right" />
        </TabNav>
        <SheetTab>库存管理统计表8月</SheetTab>
        <AddSheet width="11" height="11" viewBox="0 0 11 11" fill="none" stroke="#666" strokeWidth="0.9">
          <circle cx="5.5" cy="5.5" r="4.8" />
          <path d="M5.5 3V8M3 5.5H8" />
        </AddSheet>
        <HScroll>
          <HButton>
            <Caret $dir="left" />
          </HButton>
          <HThumb />
          <HTrack />
          <HButton>
            <Caret $dir="right" />
          </HButton>
        </HScroll>
      </TabStrip>

      <StatusBar>
        就绪
        <MacroSlot>
          <Icon w={12} h={11}>
            <path d="M1 2H5M4 10H11V5H4ZM6.3 5V10M8.6 5V10M2 2V10" stroke="#777" strokeWidth="0.9" />
          </Icon>
        </MacroSlot>
        <StatusSpacer />
        <CountText>计数: 7</CountText>
        <ViewBtn $on>
          <Icon w={10} h={10}>
            <path d="M.5 .5H9.5V9.5H.5ZM3.5 .5V9.5M6.5 .5V9.5M.5 3.5H9.5M.5 6.5H9.5" stroke="#666" strokeWidth="0.7" />
          </Icon>
        </ViewBtn>
        <ViewBtn>
          <Icon w={10} h={10}>
            <path d="M.5 .5H9.5V9.5H.5ZM3 3H7V7H3Z" stroke="#777" strokeWidth="0.7" />
          </Icon>
        </ViewBtn>
        <ViewBtn>
          <Icon w={10} h={10}>
            <path d="M.5 .5H3V5H7V.5H9.5V9.5H.5Z" stroke="#777" strokeWidth="0.7" />
          </Icon>
        </ViewBtn>
        <ZoomSign $ml={4}>-</ZoomSign>
        <ZoomSlider>
          <ZoomKnob />
        </ZoomSlider>
        <ZoomSign>+</ZoomSign>
        <ZoomValue>154%</ZoomValue>
      </StatusBar>
      <TaskEdge />
    </Window>
  );
}
